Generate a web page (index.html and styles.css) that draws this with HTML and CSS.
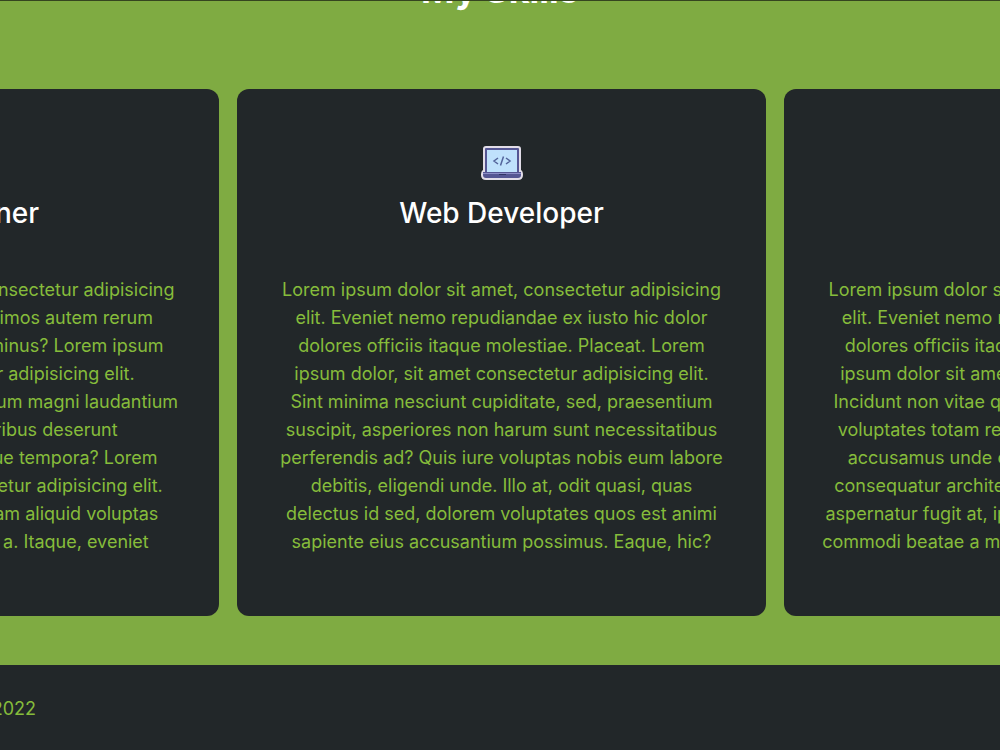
FILE: index.html
```html
<!DOCTYPE html>
<html lang="en">
<head>
    <meta charset="UTF-8">
    <meta name="viewport" content="width=device-width, initial-scale=1.0">
    <title>My Skills</title>
    <link rel="stylesheet" href="styles.css">
</head>
<body>
    <section class="skills" id="skills">
        <h2 class="heading">My Skills</h2>
        <div class="cards">
            <article class="card">
                <svg class="icon" viewBox="0 0 44 36" aria-hidden="true"><use href="#laptop"/></svg>
                <h3>UX Designer</h3>
                <p>
                    Lorem ipsum dolor sit amet, consectetur adipisicing<br>
                    elit. Quia ut tempore, dignissimos autem rerum<br>
                    nesciunt facilis, quod omnis minus? Lorem ipsum<br>
                    dolor sit amet, consectetur adipisicing elit.<br>
                    Voluptatum, ipsam sed ut nostrum magni laudantium<br>
                    quae vitae, sint est doloribus deserunt<br>
                    officia nobis sed, itaque neque tempora? Lorem<br>
                    ipsum dolor sit, amet consectetur adipisicing elit.<br>
                    Sapiente, harum quisquam nam aliquid voluptas<br>
                    laborum minima, quo labore a. Itaque, eveniet
                </p>
            </article>
            <article class="card">
                <svg class="icon" viewBox="0 0 44 36" aria-hidden="true">
                    <g id="laptop">
                        <path d="M6 1H38Q41 1 41 4V25Q43 26 43 30Q43 35 38 35H6Q1 35 1 30Q1 26 3 25V4Q3 1 6 1Z" fill="#e2dde8"/>
                        <path d="M6 3H38Q39 3 39 4V27H41V30Q41 33 38 33H6Q3 33 3 30V27H5V4Q5 3 6 3Z" fill="#555693"/>
                        <path d="M7 5H37V27H7Z" fill="#bfe1fc"/>
                        <path d="M3 28H41V29H3Z" fill="#8c8cc6"/>
                        <path d="M19 29H26V30H19Z" fill="#303464"/>
                        <path d="M18 13L14 16L18 19M26 13L30 16L26 19M23.500 11.500L20.500 20.500" fill="none" stroke="#53649b" stroke-width="1.500"/>
                    </g>
                </svg>
                <h3>Web Developer</h3>
                <p>
                    Lorem ipsum dolor sit amet, consectetur adipisicing<br>
                    elit. Eveniet nemo repudiandae ex iusto hic dolor<br>
                    dolores officiis itaque molestiae. Placeat. Lorem<br>
                    ipsum dolor, sit amet consectetur adipisicing elit.<br>
                    Sint minima nesciunt cupiditate, sed, praesentium<br>
                    suscipit, asperiores non harum sunt necessitatibus<br>
                    perferendis ad? Quis iure voluptas nobis eum labore<br>
                    debitis, eligendi unde. Illo at, odit quasi, quas<br>
                    delectus id sed, dolorem voluptates quos est animi<br>
                    sapiente eius accusantium possimus. Eaque, hic?
                </p>
            </article>
            <article class="card">
                <svg class="icon" viewBox="0 0 44 36" aria-hidden="true"><use href="#laptop"/></svg>
                <h3>Editor</h3>
                <p>
                    Lorem ipsum dolor sit amet, consectetur adipisicing<br>
                    elit. Eveniet nemo repudiandae ex iusto hic dolor<br>
                    dolores officiis itaque molestiae. Placeat. Lorem<br>
                    ipsum dolor sit amet, consectetur adipisicing elit.<br>
                    Incidunt non vitae quibusdam, sed, at praesentium<br>
                    voluptates totam rerum, harum sunt maiores esse<br>
                    accusamus unde dolor, nobis eum facere ullam<br>
                    consequatur architecto. Illo at, odit quasi, quas hic<br>
                    aspernatur fugit at, ipsam voluptates quos sed animi<br>
                    commodi beatae a magnam possimus. Eaque, hic et?
                </p>
            </article>
        </div>
    </section>
    <footer class="footer">
        <p>Copyright &copy; 2022</p>
    </footer>
</body>
</html>
```
FILE: styles.css
```css
* {
    box-sizing: border-box;
    margin: 0;
    padding: 0;
}
body {
    font-family: Inter, sans-serif;
    color: #86bc3b;
    background-color: #222729;
    overflow: hidden;
}
.skills {
    background-color: #7fab42;
    border-top: 1px solid #35451f;
    padding-bottom: 49px;
    overflow: hidden;
}
.heading {
    margin-top: -35px;
    margin-bottom: 75px;
    font-size: 36px;
    line-height: 48px;
    font-weight: 700;
    text-align: center;
    color: #fff;
}
.cards {
    display: flex;
    justify-content: center;
    gap: 18px;
    padding-left: 3px;
}
.card {
    flex: 0 0 53%;
    padding: 56px 32px 60px;
    border-radius: 12px;
    background-color: #222729;
    text-align: center;
}
.icon {
    display: block;
    width: 44px;
    height: 36px;
    margin: 0 auto 12px;
}
.card h3 {
    margin-bottom: 43px;
    font-size: 28px;
    line-height: 40px;
    font-weight: 500;
    color: #fff;
}
.card p {
    font-size: 18px;
    line-height: 28px;
    white-space: nowrap;
}
.footer {
    display: flex;
    justify-content: flex-end;
    width: 36px;
    padding: 30px 0;
    font-size: 18px;
    line-height: 28px;
    white-space: nowrap;
}
```
